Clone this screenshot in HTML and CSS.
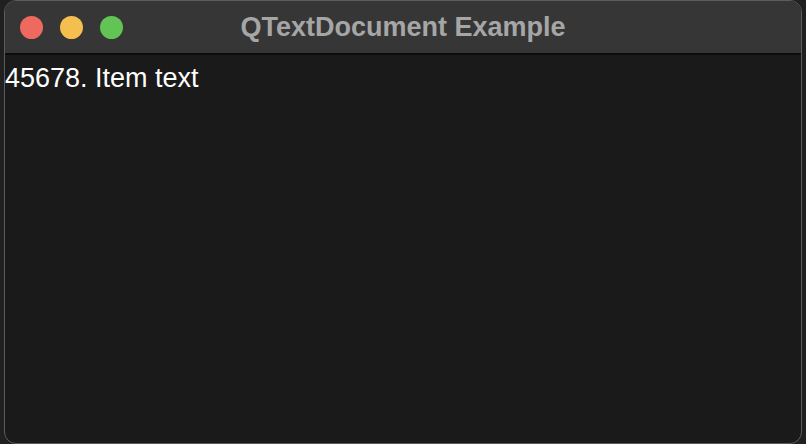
FILE: index.html
```html
<!DOCTYPE html>
<html lang="en">

<head>
    <meta charset="UTF-8">
    <meta name="viewport" content="width=device-width, initial-scale=1.0">
    <title>QTextDocument Example</title>
    <link rel="stylesheet" href="styles.css">
</head>

<body>

    <div class="window">
        <div class="titlebar">
            <div class="lights">
                <span class="light red"></span>
                <span class="light yellow"></span>
                <span class="light green"></span>
            </div>
            <div class="title">QTextDocument Example</div>
        </div>
        <div class="content">
            <p class="item">45678. Item text</p>
        </div>
    </div>

</body>

</html>
```

FILE: styles.css
```css
body {
    margin: 0;
    padding: 0 4px;
    height: 444px;
    overflow: hidden;
    background-color: #202020;
    font-family: "Liberation Sans", Arial, sans-serif;
}

.window {
    height: 444px;
    display: flex;
    flex-direction: column;
    border-radius: 12px;
    border: 1px solid #5c5c5c;
    box-sizing: border-box;
    overflow: hidden;
    background-color: #1a1a1a;
}

.titlebar {
    height: 52px;
    flex-shrink: 0;
    display: flex;
    align-items: center;
    background-color: #363636;
    border-bottom: 2px solid #0c0c0c;
    position: relative;
}

.lights {
    display: flex;
    gap: 17px;
    padding-left: 15px;
    margin-top: 1px;
}

.light {
    width: 23px;
    height: 23px;
    border-radius: 50%;
}

.red {
    background-color: #ee6a5f;
}

.yellow {
    background-color: #f5bf4f;
}

.green {
    background-color: #61c454;
}

.title {
    position: absolute;
    left: 0;
    right: 0;
    text-align: center;
    color: #a6a6a6;
    font-weight: bold;
    font-size: 27px;
}

.content {
    flex: 1;
    overflow: hidden;
}

.item {
    margin: 8px 0 0 0;
    color: #ffffff;
    font-size: 27px;
    white-space: nowrap;
}
```
